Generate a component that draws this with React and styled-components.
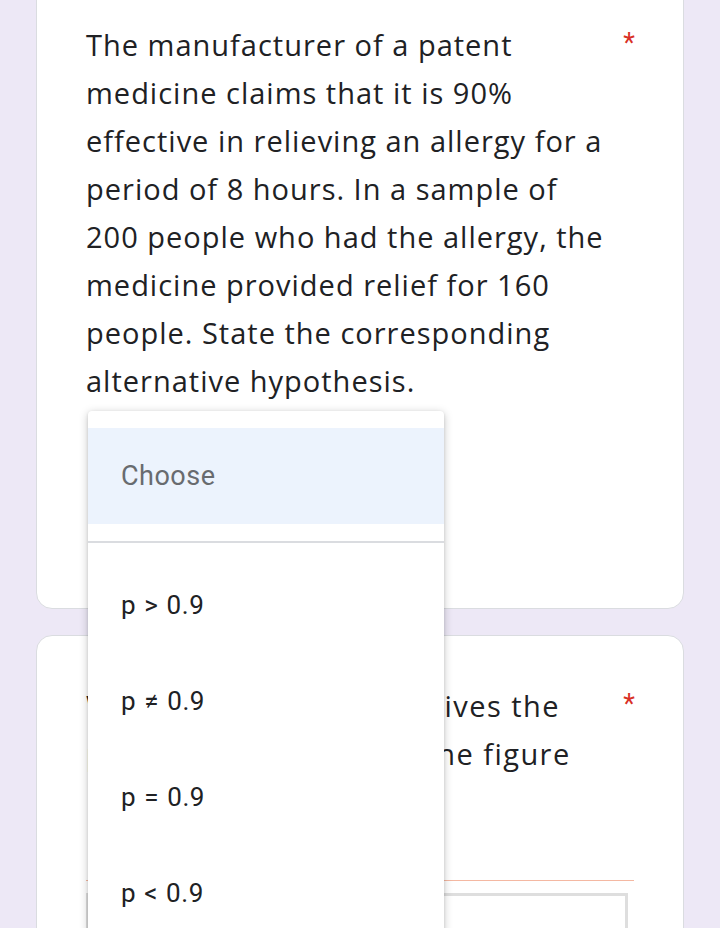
import styled, { createGlobalStyle } from "styled-components";

const GlobalStyle = createGlobalStyle`
    html, body {
        margin: 0;
        padding: 0;
        background: #ede8f6;
        overflow: hidden;
    }
`;

const Page = styled.div`
    position: relative;
    width: 720px;
    height: 928px;
    overflow: hidden;
    background: #ede8f6;
    padding: 0 36px;
    box-sizing: border-box;
    display: flex;
    flex-direction: column;
    gap: 26px;
`;

const Card = styled.div`
    background: #fff;
    border: 1px solid #dadce0;
    border-radius: 16px;
    margin-top: ${(p) => p.$top || "0"};
    padding: ${(p) => p.$pad || "24px 49px"};
    box-sizing: border-box;
    height: ${(p) => p.$height || "auto"};
    flex-shrink: 0;
`;

const Header = styled.div`
    display: flex;
    justify-content: space-between;
    align-items: flex-start;
`;

const Question = styled.div`
    font-family: "Open Sans", "Noto Sans", sans-serif;
    font-size: 29px;
    line-height: 48px;
    color: #202124;
    letter-spacing: ${(p) => p.$spacing || "1px"};
    white-space: nowrap;
`;

const Star = styled.span`
    color: #d93025;
    font-family: "Roboto", sans-serif;
    font-size: 27px;
    line-height: 26px;
    margin-top: 9px;
    margin-right: -1px;
`;

const Rule = styled.div`
    margin-top: 102px;
    height: 1px;
    background: #f4b8a2;
`;

const Picture = styled.div`
    margin-top: 12px;
    margin-right: 6px;
    height: 80px;
    border: 3px solid #dedede;
    border-bottom: none;
`;

const Menu = styled.div`
    position: absolute;
    left: 88px;
    top: 411px;
    width: 356px;
    height: 560px;
    background: #fff;
    border-radius: 4px;
    box-shadow: 0 2px 10px rgba(0, 0, 0, 0.22), 0 1px 3px rgba(0, 0, 0, 0.12);
    padding-top: 17px;
    box-sizing: border-box;
    display: flex;
    flex-direction: column;
`;

const Placeholder = styled.div`
    height: 96px;
    background: #ecf3fd;
    display: flex;
    align-items: center;
    padding-left: 33px;
    font-family: "Roboto", sans-serif;
    font-size: 27px;
    letter-spacing: 0.5px;
    color: #686b6f;
`;

const Divider = styled.div`
    margin-top: 17px;
    margin-bottom: 14px;
    height: 2px;
    background: #dadce0;
`;

const Option = styled.div`
    height: 96px;
    flex-shrink: 0;
    display: flex;
    align-items: center;
    padding-left: 33px;
    font-family: "Roboto", sans-serif;
    font-size: 26px;
    letter-spacing: 0.6px;
    word-spacing: 1px;
    color: #202124;
`;

const options = ["p > 0.9", "p ≠ 0.9", "p = 0.9", "p < 0.9"];

const App = () => (
    <>
        <GlobalStyle />
        <Page>
            <Card $top="-20px" $height="629px" $pad="40px 49px 0 49px">
                <Header>
                    <Question>
                        The manufacturer of a patent<br />
                        medicine claims that it is 90%<br />
                        effective in relieving an allergy for a<br />
                        period of 8 hours. In a sample of<br />
                        200 people who had the allergy, the<br />
                        medicine provided relief for 160<br />
                        people. State the corresponding<br />
                        alternative hypothesis.
                    </Question>
                    <Star>*</Star>
                </Header>
            </Card>
            <Card $height="400px" $pad="46px 49px 0 49px">
                <Header>
                    <Question $spacing="1.45px">
                        Which of the following gives the<br />
                        proper description for the figure
                    </Question>
                    <Star>*</Star>
                </Header>
                <Rule />
                <Picture />
            </Card>
            <Menu>
                <Placeholder>Choose</Placeholder>
                <Divider />
                {options.map((o) => (
                    <Option key={o}>{o}</Option>
                ))}
            </Menu>
        </Page>
    </>
);

export default App;
